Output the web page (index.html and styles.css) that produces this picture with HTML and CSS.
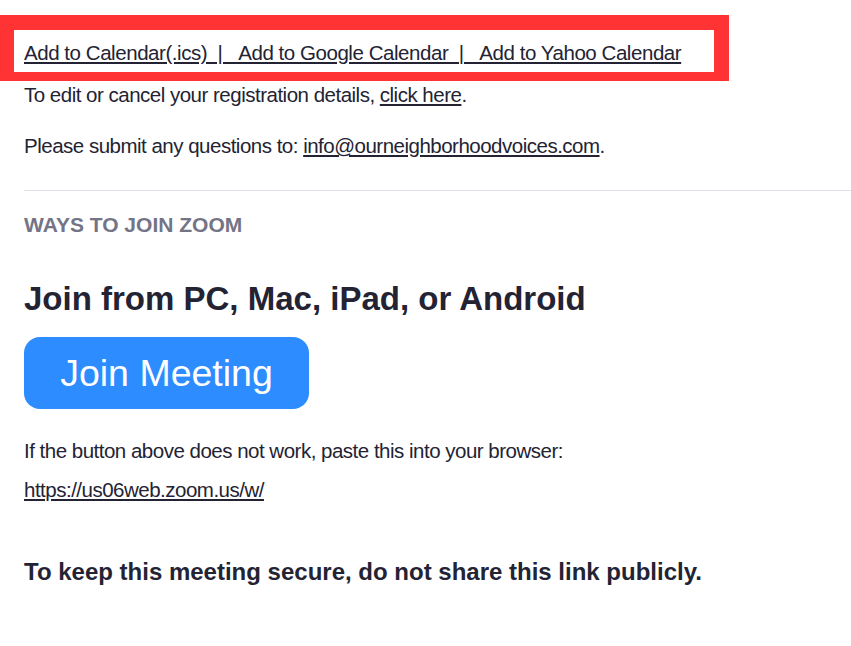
FILE: index.html
```html
<!DOCTYPE html>
<html>
<head>
<meta charset="utf-8">
<link rel="stylesheet" href="styles.css">
</head>
<body>
<div class="page">
  <div class="cal-box">
    <a href="#" class="cal-link">Add to Calendar(.ics)&nbsp;&nbsp;|&nbsp;&nbsp;&nbsp;Add to Google Calendar&nbsp;&nbsp;|&nbsp;&nbsp;&nbsp;Add to Yahoo Calendar</a>
  </div>
  <div class="content">
    <p class="line edit">To edit or cancel your registration details, <a href="#">click here</a>.</p>
    <p class="line questions">Please submit any questions to: <a href="#">info@ourneighborhoodvoices.com</a>.</p>
    <hr class="divider">
    <h3 class="ways">WAYS TO JOIN ZOOM</h3>
    <h2 class="join-title">Join from PC, Mac, iPad, or Android</h2>
    <a href="#" class="join-btn">Join Meeting</a>
    <p class="line hint">If the button above does not work, paste this into your browser:</p>
    <p class="line url"><a href="#">https://us06web.zoom.us/w/</a></p>
    <p class="secure">To keep this meeting secure, do not share this link publicly.</p>
  </div>
</div>
</body>
</html>
```

FILE: styles.css
```css
html, body {
  margin: 0;
  padding: 0;
  background: #ffffff;
}
body {
  font-family: "Liberation Sans", Arial, sans-serif;
  color: #232333;
}
a {
  color: #232333;
  text-decoration: underline;
}
.page {
  padding-top: 15px;
}
.cal-box {
  width: 690px;
  border-style: solid;
  border-color: #ff3333;
  border-width: 15px 15px 9px 14px;
  padding: 10px 0 6px 10px;
  font-size: 20.5px;
  line-height: 26px;
  letter-spacing: -0.45px;
  white-space: nowrap;
}
.content {
  padding-left: 24px;
}
.line {
  margin: 0;
  font-size: 20.5px;
  line-height: 26px;
  letter-spacing: -0.5px;
}
.edit {
  margin-top: 1px;
}
.questions {
  margin-top: 25px;
}
.divider {
  margin: 31px 0 0 0;
  border: 0;
  border-top: 1px solid #e0e0e8;
  height: 0;
}
.ways {
  margin: 21px 0 0 0;
  font-size: 21px;
  line-height: 26px;
  color: #747487;
  font-weight: bold;
}
.join-title {
  margin: 41px 0 0 0;
  font-size: 33px;
  line-height: 40px;
  font-weight: bold;
}
.join-btn {
  display: inline-flex;
  align-items: center;
  justify-content: center;
  margin-top: 18px;
  width: 285px;
  height: 72px;
  border-radius: 16px;
  background: #2d8cff;
  color: #ffffff;
  text-decoration: none;
  font-size: 37.5px;
}
.hint {
  margin-top: 29px;
}
.url {
  margin-top: 13px;
}
.secure {
  margin: 54px 0 0 0;
  font-size: 24px;
  line-height: 30px;
  font-weight: bold;
}
```
